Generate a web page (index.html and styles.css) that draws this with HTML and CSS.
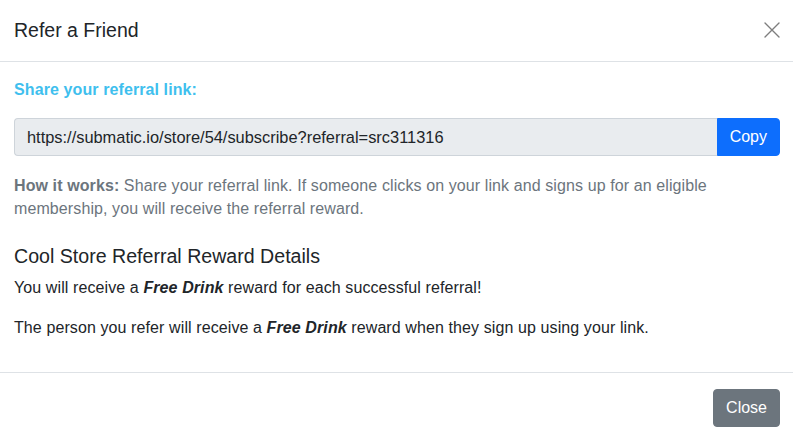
FILE: index.html
```html
<!DOCTYPE html>
<html lang="en">
<head>
    <meta charset="UTF-8">
    <meta name="viewport" content="width=device-width, initial-scale=1.0">
    <title>Refer a Friend</title>
    <link rel="stylesheet" href="styles.css">
</head>
<body>

    <div class="modal">
        <div class="modal-header">
            <h5 class="modal-title">Refer a Friend</h5>
            <button type="button" class="btn-close" aria-label="Close">
                <svg viewBox="0 0 16 16" width="16" height="16">
                    <path d="M1 1L15 15M15 1L1 15" stroke="#000" stroke-width="1.4" stroke-linecap="round"/>
                </svg>
            </button>
        </div>

        <div class="modal-body">
            <p class="share-label">Share your referral link:</p>

            <div class="input-group">
                <input type="text" class="link-input" value="https://submatic.io/store/54/subscribe?referral=src311316" readonly>
                <button type="button" class="btn btn-primary">Copy</button>
            </div>

            <p class="how-it-works"><strong>How it works:</strong> Share your referral link. If someone clicks on your link and signs up for an eligible membership, you will receive the referral reward.</p>

            <h5 class="details-title">Cool Store Referral Reward Details</h5>
            <p>You will receive a <strong><em>Free Drink</em></strong> reward for each successful referral!</p>
            <p>The person you refer will receive a <strong><em>Free Drink</em></strong> reward when they sign up using your link.</p>
        </div>

        <div class="modal-footer">
            <button type="button" class="btn btn-secondary">Close</button>
        </div>
    </div>

</body>
</html>
```

FILE: styles.css
```css
body {
    margin: 0;
    font-family: "Liberation Sans", Arial, sans-serif;
    font-size: 16px;
    line-height: 1.5;
    color: #212529;
    background-color: #fff;
}

.modal {
    background-color: #fff;
}

.modal-header {
    display: flex;
    align-items: center;
    justify-content: space-between;
    padding: 15px 13px 16px 14px;
    border-bottom: 1px solid #dee2e6;
}

.modal-title {
    margin: 0;
    font-size: 19.5px;
    font-weight: 500;
    line-height: 30px;
}

.btn-close {
    display: flex;
    padding: 0;
    border: 0;
    background: transparent;
    opacity: 0.5;
    cursor: pointer;
}

.modal-body {
    padding: 16px 13px 16px 14px;
}

.modal-body p {
    margin: 0 0 16px;
    letter-spacing: 0.1px;
}

.share-label {
    color: #3fbfee;
    font-weight: bold;
}

.input-group {
    display: flex;
    height: 38px;
    margin-bottom: 18px;
}

.link-input {
    flex: 1;
    min-width: 0;
    padding: 6px 12px;
    font-family: inherit;
    font-size: 16.4px;
    color: #212529;
    background-color: #e9ecef;
    border: 1px solid #ced4da;
    border-right: 0;
    border-radius: 4px 0 0 4px;
    outline: none;
}

.btn {
    padding: 6px 12px;
    font-family: inherit;
    font-size: 16px;
    line-height: 1.5;
    color: #fff;
    border: 1px solid transparent;
    border-radius: 4px;
    cursor: pointer;
}

.btn-primary {
    background-color: #0d6efd;
    border-color: #0d6efd;
    border-radius: 0 4px 4px 0;
}

.btn-secondary {
    background-color: #6c757d;
    border-color: #6c757d;
}

.modal-body .how-it-works {
    color: #6c757d;
    line-height: 23px;
    margin-bottom: 24px;
}

.details-title {
    margin: 0 0 8px;
    font-size: 19.6px;
    font-weight: 500;
    line-height: 24px;
}

.modal-footer {
    display: flex;
    justify-content: flex-end;
    padding: 12px 9px 12px 12px;
    border-top: 1px solid #dee2e6;
}

.modal-footer .btn {
    margin: 4px;
}
```
